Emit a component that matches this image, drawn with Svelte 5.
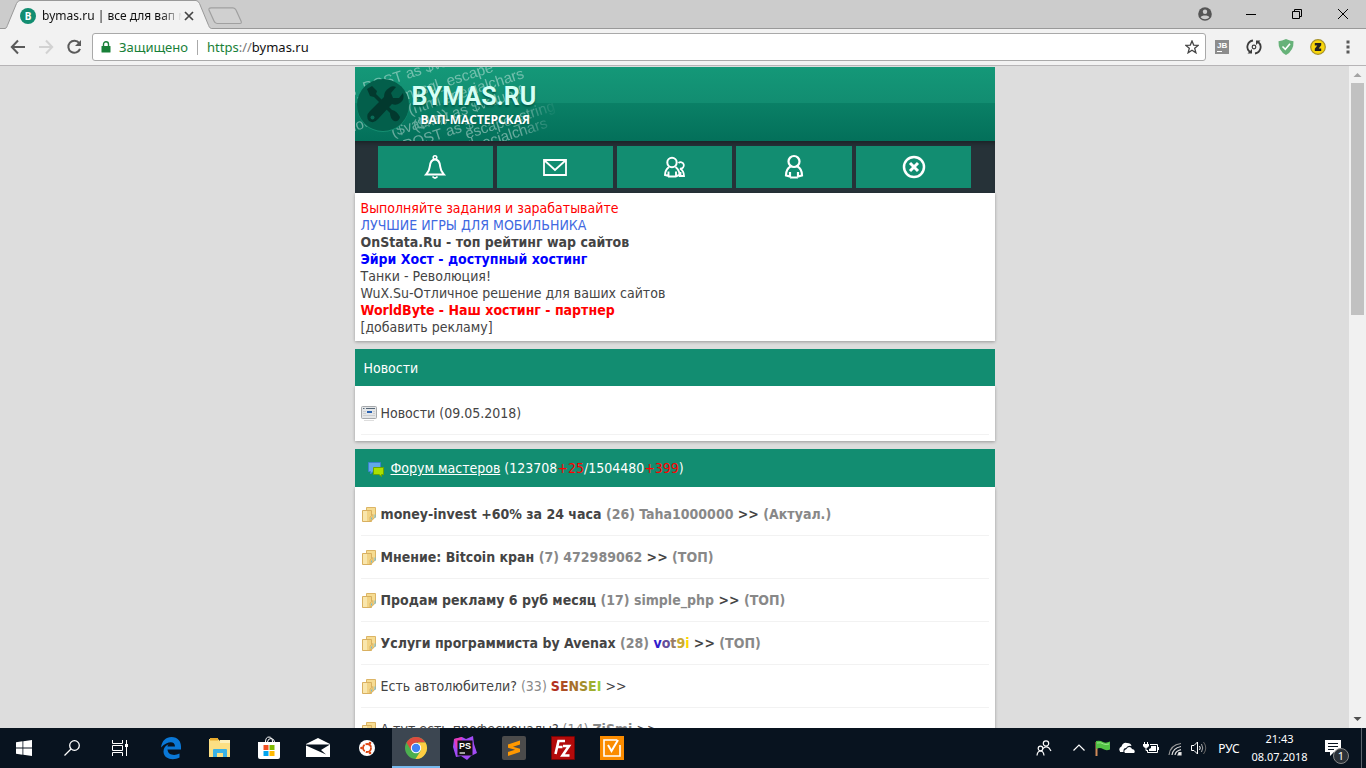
<script>
  const ads = [
    { text: 'Выполняйте задания и зарабатывайте', tone: 'red' },
    { text: 'ЛУЧШИЕ ИГРЫ ДЛЯ МОБИЛЬНИКА', tone: 'royal' },
    { text: 'OnStata.Ru - топ рейтинг wap сайтов', bold: true },
    { text: 'Эйри Хост - доступный хостинг', tone: 'blue', bold: true },
    { text: 'Танки - Революция!' },
    { text: 'WuX.Su-Отличное решение для ваших сайтов' },
    { text: 'WorldByte - Наш хостинг - партнер', tone: 'red', bold: true },
    { text: '[добавить рекламу]' }
  ]

  const topics = [
    { title: 'money-invest +60% за 24 часа', count: 26, author: 'Taha1000000', tag: 'Актуал.', pinned: true },
    { title: 'Мнение: Bitcoin кран', count: 7, author: '472989062', tag: 'ТОП', pinned: true },
    { title: 'Продам рекламу 6 руб месяц', count: 17, author: 'simple_php', tag: 'ТОП', pinned: true },
    { title: 'Услуги программиста by Avenax', count: 28, author: 'vot9i', from: [48, 32, 205], to: [255, 215, 0], tag: 'ТОП', pinned: true },
    { title: 'Есть автолюбители?', count: 33, author: 'SENSEI', from: [178, 48, 34], to: [154, 205, 50] },
    { title: 'А тут есть професионалы?', count: 14, author: 'ZiSmi' }
  ]

  const menu = ['Уведомления', 'Почта', 'Друзья', 'Профиль', 'Выход']

  const apps = ['Edge', 'Проводник', 'Store', 'Почта', 'Ubuntu', 'Chrome', 'PhpStorm', 'Sublime Text', 'FileZilla', 'Задачи']

  // Slanted code snippets behind the logo
  const snippets = [
    { x: -6, y: 31, text: '$_POST as $val' },
    { x: 48, y: 34, text: 'mysql_escape' },
    { x: 55, y: 48, text: '(html specialchars' },
    { x: 60, y: 64, text: '($key as $value){' },
    { x: -6, y: 66, text: 'docs' },
    { x: 38, y: 70, text: '($value))' },
    { x: 112, y: 72, text: 'escape_string' },
    { x: 42, y: 86, text: '_POST as $' },
    { x: 84, y: 92, text: 'mysql_' },
    { x: 114, y: 86, text: 'specialchars' }
  ]

  // Colour of one letter in a two-colour nickname
  function mix(from, to, i, total) {
    const t = i / (total - 1)
    return `rgb(${from.map((c, n) => Math.round(c + (to[n] - c) * t)).join(',')})`
  }
</script>

<div class="screen">
  <div class="tabstrip">
    <div class="tab">
      <svg class="tab-shape" viewBox="0 0 216 29" width="216" height="29">
        <path d="M0 29V28.500H5C7 28 7 26 8 24L16.500 3.500Q18 .5 20 .5H196Q198 .5 199.500 3.500L208 24C209 26 209 28 211.500 28.500H216V29Z" fill="#f2f2f2" />
        <path d="M0 28.500H5C7 28 7 26 8 24L16.500 3.500Q18 .5 20 .5H196Q198 .5 199.500 3.500L208 24C209 26 209 28 211.500 28.500H216" fill="none" stroke="#999" />
      </svg>
      <span class="favicon">B</span>
      <span class="tab-title">bymas.ru | все для вап ма</span>
      <button class="tab-close" aria-label="Закрыть вкладку">
        <svg viewBox="0 0 10 10" width="10" height="10"><path d="M1 1l8 8M9 1l-8 8" stroke="#444" stroke-width="1.700" /></svg>
      </button>
    </div>
    <button class="new-tab" aria-label="Новая вкладка">
      <svg viewBox="0 0 36 18" width="36" height="18"><path d="M3 .8H25Q27 .8 28 3L33 14Q34 16.500 32 16.500H9Q7 16.500 6 14L1 3Q.5 1 3 .8Z" fill="#d0d0d0" stroke="#a0a0a0" stroke-width="1.200" /></svg>
    </button>
    <div class="window-buttons">
      <button aria-label="Пользователь">
        <svg viewBox="0 0 14 14" width="14" height="14"><circle cx="7" cy="7" r="6.800" fill="#555" /><circle cx="7" cy="4.700" r="2.200" fill="#ccc" /><path d="M2.600 10.200C3.500 7.800 10.500 7.800 11.400 10.200C9.500 12.800 4.500 12.800 2.600 10.200Z" fill="#ccc" /></svg>
      </button>
      <button aria-label="Свернуть">
        <svg viewBox="0 0 10 10" width="10" height="10"><path d="M0 5.500H10" stroke="#000" /></svg>
      </button>
      <button aria-label="Развернуть">
        <svg viewBox="0 0 10 10" width="10" height="10"><path d="M.5 2.500H7.500V9.500H.5ZM2.500 2.500V.5H9.500V7.500H7.500" fill="none" stroke="#000" /></svg>
      </button>
      <button aria-label="Закрыть">
        <svg viewBox="0 0 10 10" width="10" height="10"><path d="M0 0L10 10M10 0L0 10" stroke="#000" /></svg>
      </button>
    </div>
  </div>

  <div class="toolbar">
    <button class="tool" aria-label="Назад">
      <svg viewBox="0 0 16 16" width="16" height="16"><path d="M15 8H2M8 1.500L1.800 8L8 14.500" fill="none" stroke="#5a5a5a" stroke-width="2" /></svg>
    </button>
    <button class="tool" aria-label="Вперёд">
      <svg viewBox="0 0 16 16" width="16" height="16"><path d="M1 8H14M8 1.500L14.200 8L8 14.500" fill="none" stroke="#d2d2d2" stroke-width="2" /></svg>
    </button>
    <button class="tool" aria-label="Обновить">
      <svg viewBox="0 0 16 16" width="16" height="16"><path d="M13.200 4.200A6 6 0 1 0 14 9.800" fill="none" stroke="#5a5a5a" stroke-width="2" /><path d="M15 1V7H9Z" fill="#5a5a5a" /></svg>
    </button>
    <div class="omnibox">
      <svg viewBox="0 0 10 12" width="10" height="12"><path d="M1 5H9Q9.500 5 9.500 5.500V11Q9.500 11.500 9 11.500H1Q.5 11.500 .5 11V5.500Q.5 5 1 5Z" fill="#188038" /><path d="M2.500 5V3.200A2.500 2.500 0 0 1 7.500 3.200V5" fill="none" stroke="#188038" stroke-width="1.400" /></svg>
      <span class="secure">Защищено</span>
      <span class="address"><span class="scheme">https</span><span class="slashes">://</span>bymas.ru</span>
      <button aria-label="Добавить в закладки">
        <svg viewBox="0 0 14 14" width="14" height="14"><path d="M7 1L8.700 5.100L13.200 5.400L9.700 8.300L10.900 12.800L7 10.300L3.100 12.800L4.300 8.300L.8 5.400L5.300 5.100Z" fill="none" stroke="#444" stroke-width="1.300" /></svg>
      </button>
    </div>
    <div class="extensions">
      <button aria-label="JetBrains">
        <svg viewBox="0 0 14 14" width="14" height="14"><rect width="14" height="14" fill="#8c8c8c" /><text x="2" y="8" class="jb">JB</text><path d="M2 11.500H7" stroke="#fff" /></svg>
      </button>
      <button aria-label="Обновление страниц">
        <svg viewBox="0 0 16 16" width="16" height="16"><path d="M7 1.500A6.500 6.500 0 0 0 3.800 13M9 14.500A6.500 6.500 0 0 0 12.200 3" fill="none" stroke="#3c3c3c" stroke-width="1.800" /><path d="M1.500 14.500H6V10ZM14.500 1.500H10V6Z" fill="#3c3c3c" /><circle cx="8" cy="8" r="1.800" fill="none" stroke="#3c3c3c" stroke-width="1.200" /></svg>
      </button>
      <button aria-label="Защита">
        <svg viewBox="0 0 16 16" width="16" height="16"><path d="M8 0Q12 2 15.500 2.200Q16 11.500 8 16Q0 11.500 .5 2.200Q4 2 8 0Z" fill="#67b279" /><path d="M4.500 7.500L7.300 10.300L12 4.800" fill="none" stroke="#fff" stroke-width="1.600" /></svg>
      </button>
      <button aria-label="Z">
        <svg viewBox="0 0 16 16" width="16" height="16"><circle cx="8" cy="8" r="7.300" fill="#f9d60a" stroke="#a5912a" stroke-width="1.200" /><path d="M4.800 4H11.200V6.200L8.700 9.500H11.200V12H4.800V9.800L7.300 6.500H4.800Z" fill="#222" /></svg>
      </button>
      <button class="more" aria-label="Меню">
        <svg viewBox="0 0 4 14" width="4" height="14"><path d="M.5.5h3v3h-3zM.5 5.500h3v3h-3zM.5 10.500h3v3h-3z" fill="#5a5a5a" /></svg>
      </button>
    </div>
  </div>

  <div class="viewport">
    <div class="page">
      <main class="site">
        <header>
          <svg viewBox="0 0 300 74" width="300" height="74">
            <defs>
              <linearGradient id="fade"><stop offset="0.550" stop-color="#fff" /><stop offset="0.680" stop-color="#000" /></linearGradient>
              <mask id="codeMask"><rect width="300" height="74" fill="url(#fade)" /></mask>
            </defs>
            <g mask="url(#codeMask)">
              <g class="code">
                {#each snippets as s}
                  <text x={s.x} y={s.y} transform="rotate(-18 {s.x} {s.y})">{s.text}</text>
                {/each}
              </g>
            </g>
            <circle cx="28" cy="39" r="26" fill="#168f72" />
            <circle cx="28" cy="38" r="26" fill="#035f4b" />
            <path d="M12 22L17 19L22 24L21 27L37 43Q42 44 45 50Q44 55 39 54Q35 51 35 46L19 30L15 29Z" fill="#02392e" />
            <path d="M34 21Q37 18 41 20L36 26L38 31L44 31L48 26Q50 33 45 36Q41 39 37 37L23 52Q19 57 14 54Q10 49 15 44L29 30Q29 24 34 21Z" fill="#02392e" />
            <circle cx="17.500" cy="50.500" r="2" fill="#0a6c58" />
          </svg>
          <div class="brand">
            <a class="logo" href="#home">BYMAS.RU</a>
            <span class="slogan">ВАП-МАСТЕРСКАЯ</span>
          </div>
        </header>

        <nav>
          {#each menu as item, i}
            <a href="#menu" aria-label={item}>
              <svg viewBox="0 0 26 26" width="26" height="26" fill="none" stroke="#fff" stroke-width="2">
                {#if i === 0}
                  <circle cx="13" cy="3.500" r="1.800" stroke-width="1.500" />
                  <path d="M13 5.500C8.500 5.500 8 9.500 7.700 13C7.500 16.500 6 18 4 20.500H22C20 18 18.500 16.500 18.300 13C18 9.500 17.500 5.500 13 5.500Z" stroke-width="2" />
                  <path d="M10.500 22.500Q13 25.500 15.500 22.500" stroke-width="1.800" />
                {:else if i === 1}
                  <path d="M2 6H24V21H2ZM2 6L13 16L24 6" stroke-width="1.800" />
                {:else if i === 2}
                  <path d="M17.500 9A3.200 3.200 0 1 1 19 14.500Q23 17 23 22H18M19.500 22V18" stroke-width="1.800" />
                  <circle cx="11" cy="8.500" r="4.700" fill="#128d71" stroke-width="2" />
                  <path d="M8 13Q4 16 4 21L7.500 22V17.500M7 22.500H15.500M15 22V17.500M15.500 22L18.500 21Q18.500 16 14.500 13" stroke-width="1.900" />
                {:else if i === 3}
                  <circle cx="13" cy="7.500" r="5.500" stroke-width="2.200" />
                  <path d="M9.500 12.500Q5 15 5 21.500L9 22.500V18M9 23.500H17M17 18V22.500L21 21.500Q21 15 16.500 12.500" stroke-width="2.200" />
                {:else}
                  <circle cx="13" cy="13" r="10" stroke-width="2.500" />
                  <path d="M9 9L17 17M17 9L9 17" stroke-width="3" />
                {/if}
              </svg>
            </a>
          {/each}
        </nav>

        <section class="card ads">
          {#each ads as ad}
            <a href="#ad" class={ad.tone} class:bold={ad.bold}>{ad.text}</a>
          {/each}
        </section>

        <h2>Новости</h2>
        <section class="card list">
          <div class="row">
            <svg viewBox="0 0 16 16" width="16" height="16"><rect x=".5" y="1.500" width="15" height="12" rx="1" fill="#e4e6e8" stroke="#a6a9ac" /><path d="M2 3.500H3.500M5 3.500H14" stroke="#567" /><path d="M6 7H11" stroke="#2a62b0" stroke-width="2" /><path d="M2 6.500H5M2 8.500H5M2 10.500H14M12 6.500H14M12 8.500H14" stroke="#ccced0" /><path d="M3 15.500H13" stroke="#ddd" /></svg>
            <a href="#news">Новости (09.05.2018)</a>
          </div>
        </section>

        <h2 class="forum">
          <svg viewBox="0 0 16 16" width="16" height="16"><path d="M.5 1.500H12.500V10.500H5L2.500 13V10.500H.5Z" fill="#62a8e8" stroke="#3b82cc" /><path d="M5.500 6.500H15.500V13.500H13.500V15.500L11 13.500H5.500Z" fill="#a9e000" stroke="#6ba500" /></svg>
          <span><a href="#forum">Форум мастеров</a> (123708<i>+25</i>/1504480<i>+399</i>)</span>
        </h2>
        <section class="card list">
          {#each topics as topic}
            <div class="row" class:bold={topic.pinned}>
              <svg viewBox="0 0 16 16" width="16" height="16"><path d="M5.500 1.500H14.500V11L12 13H5.500Z" fill="#f6dc92" stroke="#dcb566" /><path d="M1.500 4.500H10.500V15.500H1.500Z" fill="#f2d384" stroke="#d9b060" /><path d="M2 5H6V15H2Z" fill="#f9e6ac" /><path d="M9 15V11L12 8.500V13.500Z" fill="#f0cf7a" stroke="#dcb566" /><path d="M10.500 11.500V13.500M14 8.500V12" stroke="#6fbcd8" /></svg>
              <span>
                <a href="#topic">{topic.title}</a>
                <span class="muted">({topic.count})</span>
                <a href="#user" class="author">{#if topic.from}{#each topic.author as letter, i}<span style="color: {mix(topic.from, topic.to, i, topic.author.length)}">{letter}</span>{/each}{:else}{topic.author}{/if}</a>
                <a href="#last">&gt;&gt;</a>
                {#if topic.tag}<span class="muted">({topic.tag})</span>{/if}
              </span>
            </div>
          {/each}
        </section>
      </main>
    </div>
    <div class="scrollbar">
      <svg viewBox="0 0 17 17" width="17" height="17"><path d="M4.500 11H12.500L8.500 7Z" fill="#a3a3a3" /></svg>
      <div class="thumb"></div>
      <svg class="down" viewBox="0 0 17 17" width="17" height="17"><path d="M4.500 6H12.500L8.500 10Z" fill="#505050" /></svg>
    </div>
  </div>

  <footer class="taskbar">
    <button aria-label="Пуск">
      <svg viewBox="0 0 16 16" width="16" height="16"><path d="M0 2.200L6.500 1.300V7.600H0ZM7.300 1.200L16 0V7.600H7.300ZM0 8.400H6.500V14.700L0 13.800ZM7.300 8.400H16V16L7.300 14.800Z" fill="#fff" /></svg>
    </button>
    <button aria-label="Поиск">
      <svg viewBox="0 0 16 16" width="16" height="16"><circle cx="10.500" cy="5.500" r="4.800" fill="none" stroke="#fff" stroke-width="1.300" /><path d="M7 9L.5 15.500" stroke="#fff" stroke-width="1.300" /></svg>
    </button>
    <button aria-label="Представление задач">
      <svg viewBox="0 0 16 16" width="16" height="16"><path d="M.5 0V3.500H10.500V0M.5 16V12.500H10.500V16M.5 5.500H10.500V10.500H.5ZM14.500 0V16" fill="none" stroke="#fff" /><path d="M13 4H16V7H13Z" fill="#fff" /></svg>
    </button>
    <div class="apps">
      {#each apps as app, i}
        <button aria-label={app} class:active={app === 'Chrome'}>
          <svg viewBox="0 0 24 24" width="24" height="24">
            {#if i === 0}
              <path d="M2 11.500C3 4.500 7 1 12.500 1C19 1 22 5.500 22 10.500V13.500H8.500C9 19.500 16 20 20.500 17.500V21.500C14 25 4.500 23 4.500 15.500C4.500 12 6.500 9.500 9.500 8.200C8.700 9.200 8.500 10 8.500 10.500H16C16 5 9 4.500 2 11.500Z" fill="#0a78d7" />
            {:else if i === 1}
              <path d="M1 3H10L12 5H22V21H1Z" fill="#fcdf83" /><path d="M2 2H10V4.500H2Z" fill="#e8ab2d" /><path d="M12 4H22V7H12Z" fill="#fdf0bb" /><path d="M5 21V14Q5 13 6 13H18Q19 13 19 14V21H15V17H9V21Z" fill="#3ab2e6" />
            {:else if i === 2}
              <path d="M1 6H23V21Q23 23 21 23H3Q1 23 1 21Z" fill="#fff" /><path d="M8.500 6Q8.500 1 12 1Q15.500 1 15.500 6M10.500 6Q11 2.500 14 2.500Q17.500 3 17.500 6" fill="none" stroke="#fff" /><path d="M6.500 9H11.500V14H6.500Z" fill="#f25022" /><path d="M12.500 9H17.500V14H12.500Z" fill="#7fba00" /><path d="M6.500 15H11.500V20H6.500Z" fill="#00a4ef" /><path d="M12.500 15H17.500V20H12.500Z" fill="#ffb900" />
            {:else if i === 3}
              <path d="M0 8L12 2L24 8V21H0Z" fill="#fff" /><path d="M0 8.500H24L15 14L20 18.500L0 9.500Z" fill="#08131f" />
            {:else if i === 4}
              <circle cx="12" cy="12" r="8" fill="#fff" /><circle cx="12" cy="12" r="4" fill="none" stroke="#dd4814" stroke-width="1.800" stroke-dasharray="7.400 1" /><circle cx="6.500" cy="12" r="1.300" fill="#dd4814" /><circle cx="15" cy="7" r="1.300" fill="#dd4814" /><circle cx="15" cy="17" r="1.300" fill="#dd4814" />
            {:else if i === 5}
              <circle cx="12" cy="12" r="11" fill="#4caf50" /><path d="M2.500 6.500A11 11 0 0 1 21.500 6.500H12L7.300 14.700Z" fill="#dd4b3e" /><path d="M21.500 6.500A11 11 0 0 1 11.500 23L16.700 14.700L14 6.500Z" fill="#fecd42" /><circle cx="12" cy="12" r="5.200" fill="#fff" /><circle cx="12" cy="12" r="4.200" fill="#3f83f5" />
            {:else if i === 6}
              <path d="M1 3L9 1L13 3L20 0L21 8L24 17L18 20L14 24L8 20L3 21L0 11Z" fill="#a24bf5" /><path d="M1 3L9 1L8 14L3 12Z" fill="#e73bb8" /><rect x="4.500" y="4.500" width="15" height="15" fill="#111" /><text x="6" y="13" class="ps">PS</text><path d="M6.500 17H12" stroke="#fff" stroke-width="1.200" />
            {:else if i === 7}
              <rect width="24" height="24" rx="2" fill="#4b4b4b" /><path d="M6 8.500L18 4.500V8.500L11 10.800L18 12.800V16L6 20V16L13 13.700L6 11.800Z" fill="#ff9800" />
            {:else if i === 8}
              <rect x=".5" y=".5" width="23" height="23" fill="#b30a0a" stroke="#7c0000" stroke-dasharray="2 1" /><path d="M4.500 18L7.500 5H14M5.800 11H11.500M12 10H18L11.500 19.500H18.500" fill="none" stroke="#fff" stroke-width="2.600" />
            {:else}
              <rect width="24" height="24" fill="#fb8c00" /><path d="M17 4H4V20H20V9" fill="none" stroke="#fff" stroke-width="1.600" /><path d="M8 9L11.500 15L18 4" fill="none" stroke="#fff" stroke-width="2" />
            {/if}
          </svg>
        </button>
      {/each}
    </div>
    <div class="tray">
      <button class="people" aria-label="Люди">
        <svg viewBox="0 0 16 16" width="16" height="16" fill="none" stroke="#fff" stroke-width="1.200"><circle cx="10" cy="3.500" r="2.700" /><path d="M7 8.500Q10 5.500 13 8L15 11" /><circle cx="4.500" cy="8.500" r="2.300" /><path d="M1 15.500Q1.500 11 4.500 11Q7.500 11 8 15.500" /></svg>
      </button>
      <button aria-label="Скрытые значки">
        <svg viewBox="0 0 16 16" width="16" height="16"><path d="M2.500 10.500L8 5L13.500 10.500" fill="none" stroke="#fff" stroke-width="1.200" /></svg>
      </button>
      <button aria-label="Флаг">
        <svg viewBox="0 0 16 16" width="16" height="16"><path d="M1.500 2V16" stroke="#d08a58" stroke-width="2" /><path d="M1 1Q5 0 8 2Q11 3.500 15 1.500V9.500Q11 11 8 9Q5 7 1 9Z" fill="#52c245" /><path d="M2 3Q6 2 8.500 4Q11 5 14 4" fill="none" stroke="#9be58d" /></svg>
      </button>
      <button aria-label="OneDrive">
        <svg viewBox="0 0 16 16" width="16" height="16"><path d="M1 11.500Q-1 8 2.500 6.500Q4 2 8 3Q12 3 12.500 6Q9 5 7 8Q4 8 4.500 12H1Z" fill="#fff" /><path d="M6 13Q4 10.500 7.500 9Q9 6 12 7.500L13 9Q16.500 9.500 15.500 12.500L15 13Z" fill="#fff" /></svg>
      </button>
      <button aria-label="Батарея">
        <svg viewBox="0 0 16 16" width="16" height="16"><path d="M7 4.500H14.500V12.500H4.500V10M15.500 7V10" fill="none" stroke="#fff" /><path d="M8 6H13V11H6V9L8 8Z" fill="#fff" /><path d="M1.500 2V4M4.500 2V4M3 7V10.500H5" stroke="#fff" fill="none" /><path d="M0 4H6V6Q5 8 3 8Q1 8 0 6Z" fill="#fff" /></svg>
      </button>
      <button aria-label="Сеть">
        <svg viewBox="0 0 16 16" width="16" height="16" fill="none" stroke="#ddd" stroke-width="1.200"><path d="M2 15Q3 5 14 3.500" stroke="#999" /><path d="M5 15Q6 8 14 6.500" /><path d="M8 15Q8.500 11 14 9.700" /><path d="M12 12.500H14V15H11Z" fill="#fff" /></svg>
      </button>
      <button aria-label="Громкость">
        <svg viewBox="0 0 16 16" width="16" height="16" fill="none" stroke="#fff"><path d="M.5 5.500H3L6.500 2V14L3 10.500H.5Z" /><path d="M8.500 6Q10 8 8.500 10" /><path d="M10.500 4Q13 8 10.500 12" stroke="#aaa" /><path d="M12.500 2Q17 8 12.500 14" stroke="#666" /></svg>
      </button>
      <button class="lang">РУС</button>
      <button class="clock"><span>21:43</span><span>08.07.2018</span></button>
      <button class="notices" aria-label="Уведомления">
        <svg viewBox="0 0 17 17" width="17" height="17"><path d="M0 0H16V12H9L5 16V12H0Z" fill="#fff" /><path d="M3 3.500H13M3 6.500H13M3 9.500H9" stroke="#08131f" /></svg>
        <span class="badge">1</span>
      </button>
    </div>
  </footer>
</div>

<style>
  :global(body) {
    margin: 0;
  }

  .screen {
    display: flex;
    flex-direction: column;
    height: 100vh;
    overflow: hidden;
    font-family: 'Noto Sans', sans-serif;
    font-size: 14px;
    color: #444;
  }

  button {
    display: flex;
    align-items: center;
    justify-content: center;
    padding: 0;
    border: 0;
    background: none;
    font: inherit;
    color: inherit;
  }

  svg {
    display: block;
    flex-shrink: 0;
  }

  a {
    color: inherit;
    text-decoration: none;
  }

  .bold,
  .author {
    font-weight: bold;
  }

  /* browser window */
  .tabstrip {
    display: flex;
    flex-shrink: 0;
    height: 29px;
    background: #ccc;
    box-shadow: inset 0 -1px #999;
    font-size: 12px;
    color: #111;
  }

  .tab {
    position: relative;
    display: flex;
    align-items: center;
    box-sizing: border-box;
    width: 212px;
    padding: 2px 18px 0 20px;
  }

  .tab-shape {
    position: absolute;
    top: 0;
    left: 0;
  }

  .favicon {
    position: relative;
    width: 16px;
    border-radius: 50%;
    background: #128d71;
    color: #fff;
    font-size: 10px;
    font-weight: bold;
    line-height: 16px;
    text-align: center;
  }

  .tab-title {
    position: relative;
    flex: 1;
    margin: 0 2px 0 6px;
    overflow: hidden;
    white-space: nowrap;
    mask-image: linear-gradient(to right, #000 85%, transparent);
  }

  .tab-close {
    position: relative;
  }

  .new-tab {
    align-self: flex-start;
    margin-top: 7px;
    margin-left: -4px;
  }

  .window-buttons {
    display: flex;
    height: 27px;
    margin-left: auto;
  }

  .window-buttons button {
    width: 46px;
  }

  .toolbar {
    display: flex;
    flex-shrink: 0;
    align-items: center;
    box-sizing: border-box;
    height: 37px;
    padding: 0 4px;
    border-bottom: 1px solid #b6b4b6;
    background: #f2f2f2;
  }

  .tool {
    width: 28px;
    height: 28px;
  }

  .omnibox {
    display: flex;
    flex: 1;
    align-items: center;
    box-sizing: border-box;
    height: 28px;
    margin-left: 4px;
    padding: 0 6px 0 8px;
    border: 1px solid #a9a9a9;
    border-radius: 3px;
    background: #fff;
    font-size: 13px;
  }

  .omnibox button {
    margin-left: auto;
  }

  .secure {
    margin-left: 8px;
    padding-right: 9px;
    border-right: 1px solid #aaa;
    color: #188038;
    line-height: 15px;
  }

  .address {
    margin-left: 9px;
    color: #111;
  }

  .scheme {
    color: #188038;
  }

  .slashes {
    color: #777;
  }

  .extensions {
    display: flex;
  }

  .extensions button {
    width: 32px;
    height: 28px;
  }

  .extensions .more {
    width: 28px;
  }

  .jb {
    font: bold 8px 'Liberation Sans', sans-serif;
    fill: #fff;
  }

  .viewport {
    display: flex;
    flex: 1;
    min-height: 0;
    background: #ddd;
  }

  .page {
    flex: 1;
    overflow: hidden;
  }

  .scrollbar {
    display: flex;
    flex-direction: column;
    width: 17px;
    background: #f1f1f1;
  }

  .thumb {
    height: 35%;
    margin: 0 2px;
    background: #c1c1c1;
  }

  .down {
    margin-top: auto;
  }

  /* site */
  .site {
    max-width: 640px;
    margin: 1px auto 0;
    font-family: 'DejaVu Sans Condensed', 'Noto Sans', sans-serif;
  }

  header {
    position: relative;
    display: flex;
    height: 74px;
    background: linear-gradient(#149878, #128d71 48%, #0a8066 49%, #03705a);
  }

  .code {
    font: 15px 'Liberation Sans', sans-serif;
    fill: #fff;
    opacity: 0.4;
  }

  .brand {
    position: absolute;
    top: 15px;
    left: 57px;
    display: flex;
    flex-direction: column;
    color: #fff;
  }

  .logo {
    color: #d5fff5;
    font: bold 25px 'Roboto', sans-serif;
    line-height: 30px;
    text-shadow: 0 2px 2px #035f4b;
  }

  .slogan {
    padding-left: 9px;
    font: bold 12px 'Open Sans', sans-serif;
    line-height: 16px;
    text-shadow: 0 1px 2px #035f4b;
  }

  nav {
    display: flex;
    gap: 4px;
    padding: 5px 23px;
    background: #263238;
    box-shadow: inset 0 4px 4px -2px #1b2226;
  }

  nav a {
    display: flex;
    flex: 1;
    align-items: center;
    justify-content: center;
    height: 42px;
    background: #128d71;
  }

  .card {
    margin-bottom: 8px;
    padding: 6px;
    background: #fff;
    box-shadow: 0 1px 3px rgba(0, 0, 0, 0.3);
  }

  .ads {
    display: flex;
    flex-direction: column;
    align-items: flex-start;
    padding: 7px 6px 5px;
    line-height: 17px;
  }

  .red {
    color: #f00;
  }

  .royal {
    color: #4169e1;
  }

  .blue {
    color: #00f;
  }

  h2 {
    position: relative;
    margin: 0;
    padding: 11px 9px 9px;
    background: #128d71;
    color: #fff;
    font-size: 14px;
    font-weight: normal;
    line-height: 17px;
  }

  .forum {
    display: flex;
    gap: 7px;
    align-items: center;
    padding: 11px 13px 10px;
  }

  .forum a {
    text-decoration: underline;
  }

  .forum i {
    color: #f00;
    font-style: normal;
  }

  .row {
    display: flex;
    gap: 4px;
    align-items: center;
    height: 42px;
    border-bottom: 1px solid #f2f2f2;
  }

  .muted,
  .author {
    color: #888;
  }

  /* taskbar */
  .taskbar {
    display: flex;
    flex-shrink: 0;
    height: 40px;
    background: #08131f;
    color: #fff;
    font-size: 12px;
  }

  .taskbar > button,
  .apps button {
    width: 48px;
  }

  .apps {
    display: flex;
    gap: 1px;
    margin-left: 3px;
  }

  .active {
    background: #3c4651;
    box-shadow: inset 0 -2px #76b9ed;
  }

  .ps {
    font: bold 9px 'Liberation Sans', sans-serif;
    fill: #fff;
  }

  .tray {
    display: flex;
    margin-left: auto;
    padding-right: 4px;
  }

  .tray button {
    width: 24px;
  }

  .tray .people {
    margin-right: 11px;
  }

  .tray .lang {
    width: 36px;
  }

  .tray .clock {
    flex-direction: column;
    width: 65px;
    font-size: 11px;
    line-height: 18px;
  }

  .tray .notices {
    position: relative;
    width: 50px;
    padding-right: 6px;
    border-right: 1px solid #5b636c;
  }

  .badge {
    position: absolute;
    right: 12px;
    bottom: 4px;
    width: 14px;
    border: 1px solid #888;
    border-radius: 50%;
    background: #2b3138;
    font-size: 11px;
    line-height: 14px;
  }
</style>
